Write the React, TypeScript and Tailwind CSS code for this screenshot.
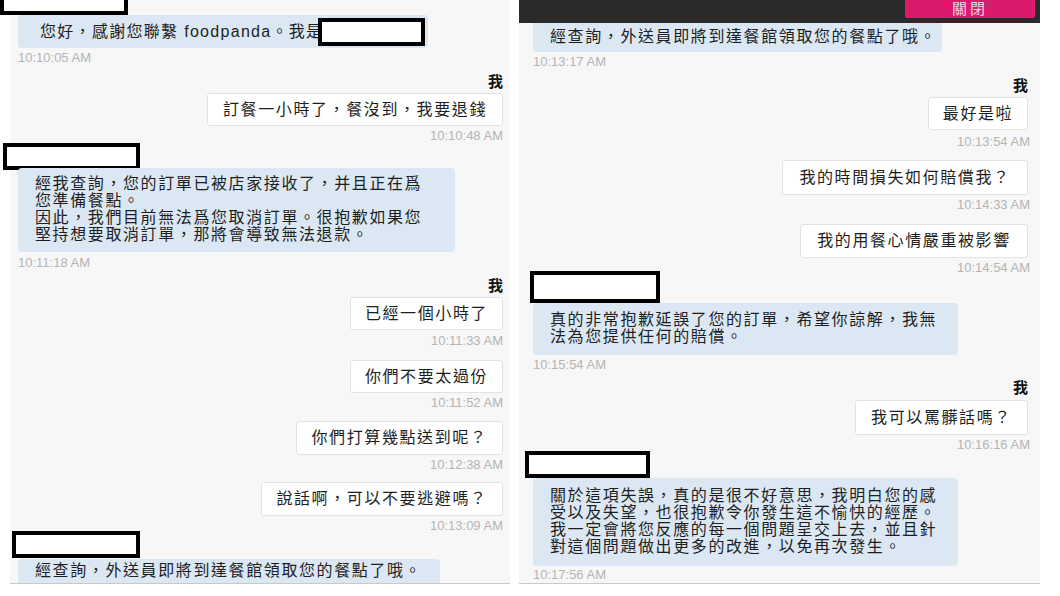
import React from "react";

const CJK = { fontFamily: '"Liberation Sans", "Noto Sans CJK TC", sans-serif' };

function Redact({ className }: { className: string }) {
  return <div className={`shrink-0 border-[4px] border-black bg-white ${className}`} />;
}

function Stamp({ t, right, className }: { t: string; right?: boolean; className: string }) {
  return (
    <div
      className={`h-[14px] leading-[14px] text-[13px] text-[#b4b4b4] ${right ? "self-end" : "self-start"} ${className}`}
    >
      {t}
    </div>
  );
}

function Me({ className }: { className: string }) {
  return <div className={`self-end h-[16px] leading-[16px] text-[15px] font-bold text-[#111] ${className}`}>我</div>;
}

function Mine({ t, w, className }: { t: string; w: string; className: string }) {
  return (
    <div
      className={`self-end flex items-center justify-center whitespace-nowrap rounded-[3px] border border-[#e2e2e2] bg-white text-[16px] tracking-[1.6px] text-[#1e1e1e] ${w} ${className}`}
    >
      {t}
    </div>
  );
}

function Agent({ lines, className }: { lines: string[]; className: string }) {
  return (
    <div
      className={`self-start flex flex-col justify-center rounded-[4px] bg-[#dbe8f4] pl-[17px] text-[16px] leading-[16.8px] tracking-[1.6px] text-[#1e1e1e] ${className}`}
    >
      {lines.map((l) => (
        <div key={l} className="whitespace-nowrap">
          {l}
        </div>
      ))}
    </div>
  );
}

export default function App() {
  return (
    <div className="w-[1060px] h-[596px] bg-white overflow-hidden flex items-start" style={CJK}>
      {/* left screenshot */}
      <div className="ml-[10px] w-[500px] h-[584px] bg-[#f7f7f7] border-b border-[#c9c9c9] flex flex-col overflow-visible">
        <Redact className="-mt-[6px] -ml-[10px] h-[21px] w-[128px]" />
        <div className="relative ml-[8px] w-[410px] h-[33px] rounded-[4px] bg-[#dbe8f4] pl-[22px] flex items-center whitespace-nowrap text-[16px] tracking-[1.3px] text-[#1e1e1e]">
          您好，感謝您聯繫 foodpanda。我是
          <div className="absolute left-[300px] top-[3px] h-[28px] w-[107px] border-[4px] border-black bg-white" />
        </div>
        <Stamp t="10:10:05 AM" className="ml-[8px] mt-[3px]" />
        <Me className="mr-[7px] mt-[9px]" />
        <Mine t="訂餐一小時了，餐沒到，我要退錢" w="w-[296px]" className="mr-[7px] mt-[3px] h-[33px]" />
        <Stamp t="10:10:48 AM" right className="mr-[7px] mt-[3px]" />
        <Redact className="-ml-[7px] h-[27px] w-[137px]" />
        <Agent
          className="ml-[8px] -mt-[2px] h-[84px] w-[437px]"
          lines={[
            "經我查詢，您的訂單已被店家接收了，并且正在爲",
            "您準備餐點。",
            "因此，我們目前無法爲您取消訂單。很抱歉如果您",
            "堅持想要取消訂單，那將會導致無法退款。",
          ]}
        />
        <Stamp t="10:11:18 AM" className="ml-[8px] mt-[4px]" />
        <Me className="mr-[7px] mt-[8px]" />
        <Mine t="已經一個小時了" w="w-[153px]" className="mr-[7px] mt-[3px] h-[33px]" />
        <Stamp t="10:11:33 AM" right className="mr-[7px] mt-[4px]" />
        <Mine t="你們不要太過份" w="w-[153px]" className="mr-[7px] mt-[12px] h-[33px]" />
        <Stamp t="10:11:52 AM" right className="mr-[7px] mt-[3px]" />
        <Mine t="你們打算幾點送到呢？" w="w-[207px]" className="mr-[7px] mt-[11px] h-[34px]" />
        <Stamp t="10:12:38 AM" right className="mr-[7px] mt-[3px]" />
        <Mine t="說話啊，可以不要逃避嗎？" w="w-[242px]" className="mr-[7px] mt-[10px] h-[34px]" />
        <Stamp t="10:13:09 AM" right className="mr-[7px] mt-[3px]" />
        <Redact className="ml-[2px] -mt-[2px] h-[27px] w-[128px]" />
        <Agent
          className="ml-[8px] mt-[1px] h-[24px] w-[422px] rounded-b-none"
          lines={["經查詢，外送員即將到達餐館領取您的餐點了哦。"]}
        />
      </div>

      {/* right screenshot */}
      <div className="ml-[9px] w-[521px] h-[584px] bg-[#f7f7f7] border-b border-[#c9c9c9] flex flex-col overflow-hidden">
        <div className="h-[23px] shrink-0 bg-[#2a2a2a] flex justify-end pr-[5px]">
          <div className="h-[18px] w-[130px] rounded-b-[2px] bg-[#dc1a6c] flex items-center justify-center text-[15px] tracking-[3px] text-[#f6d6e4]">
            關閉
          </div>
        </div>
        <Agent
          className="ml-[14px] h-[29px] w-[409px] rounded-t-none"
          lines={["經查詢，外送員即將到達餐館領取您的餐點了哦。"]}
        />
        <Stamp t="10:13:17 AM" className="ml-[14px] mt-[3px]" />
        <Me className="mr-[12px] mt-[9px]" />
        <Mine t="最好是啦" w="w-[100px]" className="mr-[12px] mt-[3px] h-[33px]" />
        <Stamp t="10:13:54 AM" right className="mr-[10px] mt-[5px]" />
        <Mine t="我的時間損失如何賠償我？" w="w-[246px]" className="mr-[12px] mt-[11px] h-[35px]" />
        <Stamp t="10:14:33 AM" right className="mr-[10px] mt-[3px]" />
        <Mine t="我的用餐心情嚴重被影響" w="w-[228px]" className="mr-[12px] mt-[12px] h-[34px]" />
        <Stamp t="10:14:54 AM" right className="mr-[10px] mt-[3px]" />
        <Redact className="ml-[11px] -mt-[4px] h-[32px] w-[130px]" />
        <Agent
          className="ml-[14px] h-[52px] w-[425px]"
          lines={["真的非常抱歉延誤了您的訂單，希望你諒解，我無", "法為您提供任何的賠償。"]}
        />
        <Stamp t="10:15:54 AM" className="ml-[14px] mt-[3px]" />
        <Me className="mr-[12px] mt-[8px]" />
        <Mine t="我可以罵髒話嗎？" w="w-[173px]" className="mr-[12px] mt-[4px] h-[35px]" />
        <Stamp t="10:16:16 AM" right className="mr-[10px] mt-[3px]" />
        <Redact className="ml-[6px] -mt-[1px] h-[27px] w-[125px]" />
        <Agent
          className="ml-[14px] h-[88px] w-[425px]"
          lines={[
            "關於這項失誤，真的是很不好意思，我明白您的感",
            "受以及失望，也很抱歉令你發生這不愉快的經歷。",
            "我一定會將您反應的每一個問題呈交上去，並且針",
            "對這個問題做出更多的改進，以免再次發生。",
          ]}
        />
        <Stamp t="10:17:56 AM" className="ml-[14px] mt-[2px]" />
      </div>
    </div>
  );
}
